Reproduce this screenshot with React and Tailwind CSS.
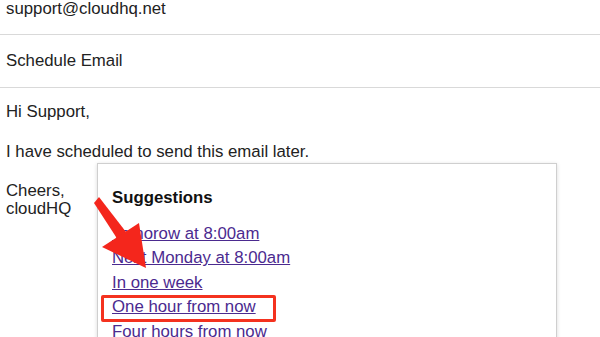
// Schedule email compose view with the "Suggestions" dropdown open and a callout.

const links = [
  "Tomorow at 8:00am",
  "Next Monday at 8:00am",
  "In one week",
  "One hour from now",
  "Four hours from now",
];

function Arrow() {
  return (
    <svg
      className="absolute left-0 top-0"
      width="600"
      height="337"
      viewBox="0 0 600 337"
    >
      <polygon points="94,203 99,197 126,232 118,240" fill="#f4261c" />
      <polygon points="102,247 139,223 146,268" fill="#f4261c" />
    </svg>
  );
}

export default function App() {
  return (
    <div
      className="relative w-[600px] h-[337px] overflow-hidden bg-white text-[16.8px] text-[#222]"
      style={{ fontFamily: '"Liberation Sans", Arial, sans-serif' }}
    >
      <div className="h-[35px] px-[6px] leading-[17px] border-b border-[#d9d9d9]">
        support@cloudhq.net
      </div>
      <div className="h-[53px] px-[6px] flex items-center border-b border-[#d9d9d9]">
        Schedule Email
      </div>
      <div className="px-[6px] pt-[14px] leading-[19px]">
        <p>Hi Support,</p>
        <p className="mt-[21px]">I have scheduled to send this email later.</p>
        <div className="mt-[21px] leading-[18px]">
          <p>Cheers,</p>
          <p>cloudHQ</p>
        </div>
      </div>

      <div className="absolute left-[97px] top-[163px] w-[460px] h-[200px] bg-white border border-[#cfcfcf] shadow-[0_1px_4px_rgba(0,0,0,0.15)] px-[14px] pt-[24px]">
        <div className="font-bold text-[#111] leading-[19px]">Suggestions</div>
        <ul className="mt-[15px]">
          {links.map((l) => (
            <li key={l} className="h-[24.4px] leading-[24px]">
              <a href="#" className="text-[#4b2a8f] underline">
                {l}
              </a>
            </li>
          ))}
        </ul>
      </div>

      <div className="absolute left-[101px] top-[295px] w-[175px] h-[27px] border-[3px] border-[#f4321f] rounded-[2px]" />
      <Arrow />
    </div>
  );
}
